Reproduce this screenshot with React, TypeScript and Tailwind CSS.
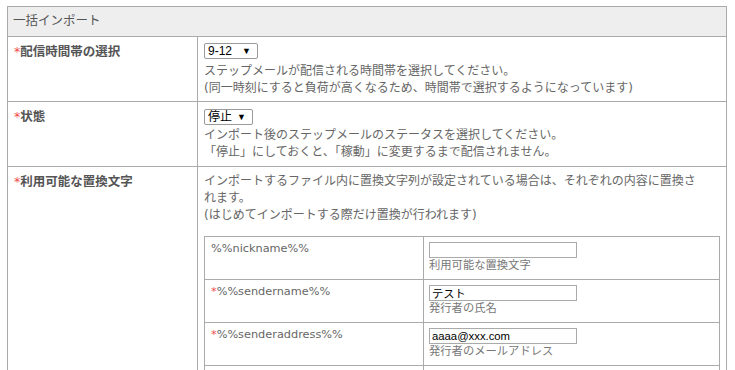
import React from "react";

const jp = "font-['DejaVu_Sans','Noto_Sans_CJK_JP',sans-serif]";

function Req() {
  return <span className="font-normal text-[#f04a4a]">*</span>;
}

function FakeSelect({ value, width }: { value: string; width: string }) {
  return (
    <div
      className={`flex h-[16px] ${width} items-center justify-between rounded-[2px] border border-[#9a9a9a] bg-white pl-[3px] pr-[6px] font-['Liberation_Sans','Noto_Sans_CJK_JP',sans-serif] text-[12px] leading-[14px] text-black`}
    >
      <span>{value}</span>
      <span className="text-[9px] leading-none">▼</span>
    </div>
  );
}

const fields = [
  { key: "%%nickname%%", req: false, value: "", note: "利用可能な置換文字" },
  { key: "%%sendername%%", req: true, value: "テスト", note: "発行者の氏名" },
  { key: "%%senderaddress%%", req: true, value: "aaaa@xxx.com", note: "発行者のメールアドレス" },
];

export default function App() {
  return (
    <div className={`h-[370px] w-[735px] overflow-hidden bg-white pl-[7px] pt-[6px] ${jp} text-[#666]`}>
      <table className="w-[720px] table-fixed border-collapse">
        <colgroup>
          <col className="w-[190px]" />
          <col />
        </colgroup>
        <thead>
          <tr>
            <th
              colSpan={2}
              className="h-[30px] border border-[#aaa] bg-[#eee] px-[5px] text-left align-middle text-[12.5px] font-normal text-[#555]"
            >
              一括インポート
            </th>
          </tr>
        </thead>
        <tbody>
          {/* 配信時間帯 */}
          <tr>
            <td className="border border-[#aaa] px-[6px] pt-[6px] align-top text-[12.5px] font-bold leading-[17px] text-[#555]">
              <Req />配信時間帯の選択
            </td>
            <td className="border border-[#aaa] px-[6px] pb-[4px] pt-[6px] align-top text-[12px] leading-[17px]">
              <div className="mb-[4px]">
                <FakeSelect value="9-12" width="w-[54px]" />
              </div>
              <p>ステップメールが配信される時間帯を選択してください。</p>
              <p>(同一時刻にすると負荷が高くなるため、時間帯で選択するようになっています)</p>
            </td>
          </tr>

          {/* 状態 */}
          <tr>
            <td className="border border-[#aaa] px-[6px] pt-[6px] align-top text-[12.5px] font-bold leading-[17px] text-[#555]">
              <Req />状態
            </td>
            <td className="border border-[#aaa] px-[6px] pb-[5px] pt-[7px] align-top text-[12px] leading-[17px]">
              <div className="mb-[2px]">
                <FakeSelect value="停止" width="w-[49px]" />
              </div>
              <p>インポート後のステップメールのステータスを選択してください。</p>
              <p>「停止」にしておくと、「稼動」に変更するまで配信されません。</p>
            </td>
          </tr>

          {/* 置換文字 */}
          <tr>
            <td className="border border-[#aaa] px-[6px] pt-[6px] align-top text-[12.5px] font-bold leading-[17px] text-[#555]">
              <Req />利用可能な置換文字
            </td>
            <td className="border border-[#aaa] px-[6px] pb-[6px] pt-[6px] align-top text-[12px] leading-[17px]">
              <p className="w-[500px]">
                インポートするファイル内に置換文字列が設定されている場合は、それぞれの内容に置換されます。
              </p>
              <p>(はじめてインポートする際だけ置換が行われます)</p>
              <table className="mt-[12px] w-full table-fixed border-collapse">
                <colgroup>
                  <col className="w-[219px]" />
                  <col />
                </colgroup>
                <tbody>
                  {fields.map((f) => (
                    <tr key={f.key}>
                      <td className="h-[43px] border border-[#aaa] px-[6px] pt-[4px] align-top text-[11.3px] leading-[16px] text-[#666]">
                        {f.req && <Req />}
                        {f.key}
                      </td>
                      <td className="border border-[#aaa] px-[5px] pb-[5px] pt-[5px] align-top text-[11.3px] leading-[16px] text-[#777]">
                        <input
                          readOnly
                          defaultValue={f.value}
                          className="block h-[16px] w-[148px] border border-[#aaa] bg-white px-[2px] font-['Liberation_Sans','Noto_Sans_CJK_JP',sans-serif] text-[11.3px] leading-[14px] text-black outline-none"
                        />
                        <p>{f.note}</p>
                      </td>
                    </tr>
                  ))}
                  {/* next row, below the fold */}
                  <tr>
                    <td className="h-[43px] border border-[#aaa]" />
                    <td className="border border-[#aaa]" />
                  </tr>
                </tbody>
              </table>
            </td>
          </tr>
        </tbody>
      </table>
    </div>
  );
}
